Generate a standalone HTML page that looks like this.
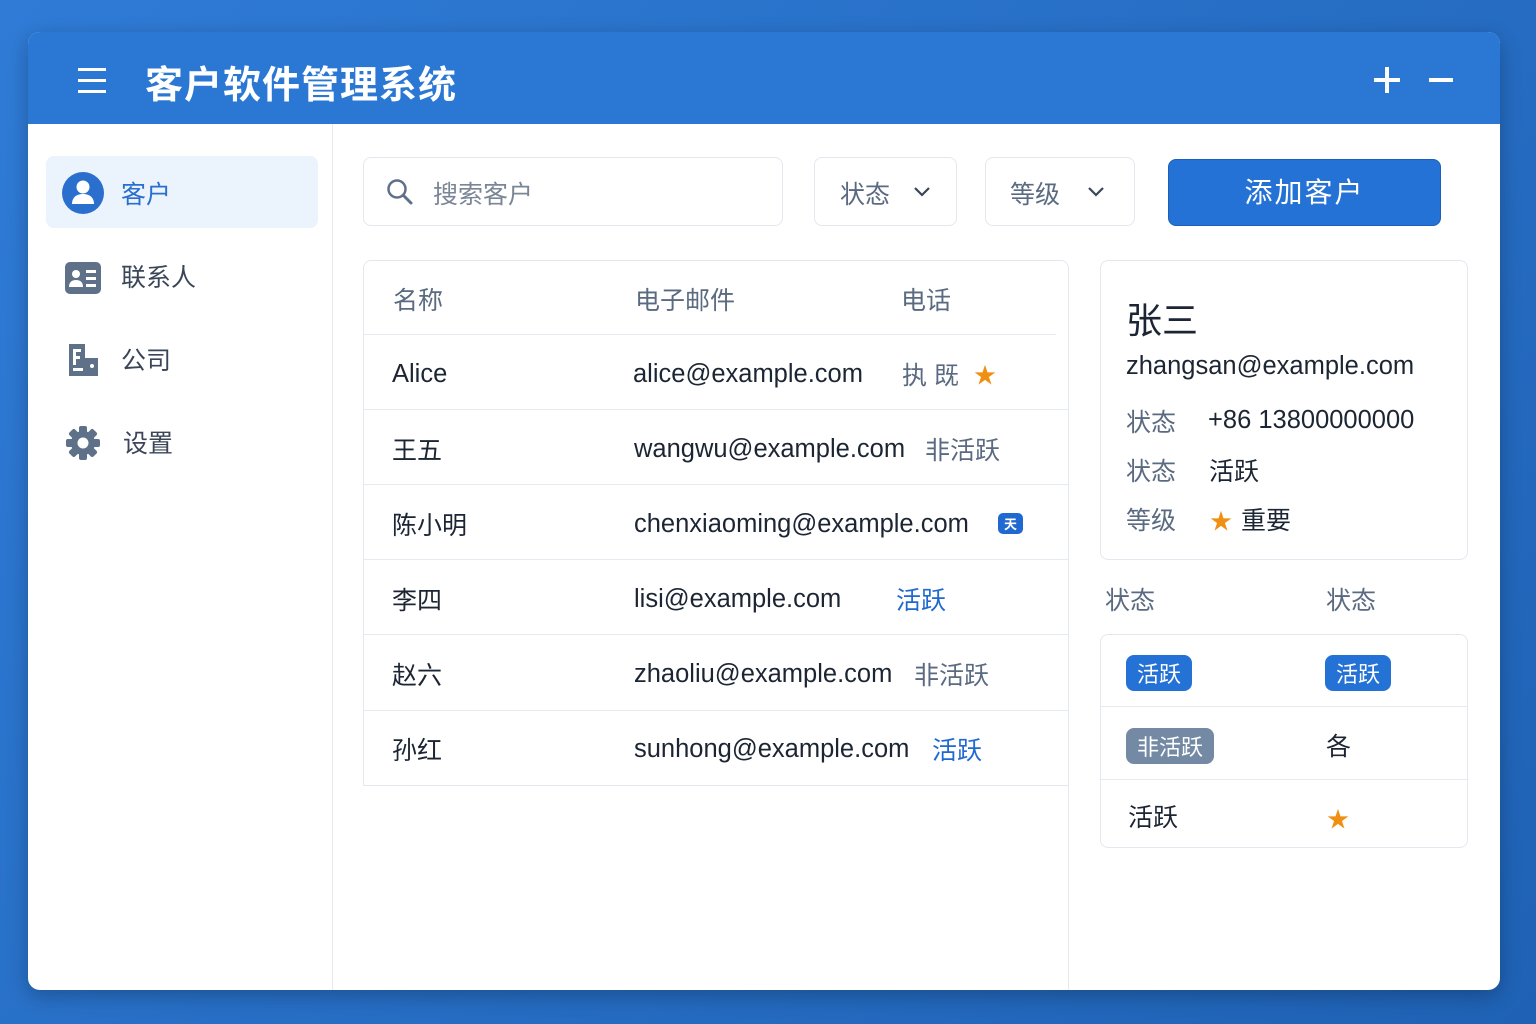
<!DOCTYPE html>
<html><head><meta charset="utf-8"><style>
*{margin:0;padding:0;box-sizing:border-box}
body{width:1536px;height:1024px;background:linear-gradient(135deg,#2f7bd6,#1f62b5);font-family:"Liberation Sans","Noto Sans CJK SC",sans-serif;position:relative;overflow:hidden;color:#1c2533}
.a{position:absolute}
.win{left:28px;top:32px;width:1472px;height:958px;background:#fff;border-radius:12px;overflow:hidden;box-shadow:0 6px 20px rgba(0,0,0,.25)}
.hdr{left:0;top:0;width:1472px;height:92px;background:#2a78d4}
.t{font-size:25px;white-space:nowrap}
.l{font-size:25.5px;margin-top:2px}
.g{color:#5a6a80}
.card{background:#fff;border:1px solid #e3e8ef;border-radius:8px}
.line{height:1px;background:#e6eaf0}
.badge{border-radius:8px;color:#fff;font-size:22px;padding:2px 11px}
.st{color:#f08f12;font-size:22px}
</style></head><body>
<div class="a win">
 <div class="a hdr">
  <div class="a" style="left:50px;top:36px;width:28px;height:3px;background:#fff;box-shadow:0 11px 0 #fff,0 22px 0 #fff"></div>
  <div class="a" style="left:117px;top:22px;color:#fff;font-size:38px;font-weight:bold;letter-spacing:1px">客户软件管理系统</div>
  <div class="a" style="left:1346px;top:46px;width:26px;height:4px;background:#fff"></div>
  <div class="a" style="left:1357px;top:35px;width:4px;height:26px;background:#fff"></div>
  <div class="a" style="left:1401px;top:46px;width:24px;height:4px;background:#fff"></div>
 </div>
 <div class="a" style="left:304px;top:92px;width:1px;height:866px;background:#e6eaf0"></div>
 <div class="a" style="left:18px;top:124px;width:272px;height:72px;background:#ebf3fd;border-radius:8px"></div>
 <svg class="a" style="left:34px;top:140px" width="42" height="42" viewBox="0 0 42 42"><circle cx="21" cy="21" r="21" fill="#2a6fcd"/><circle cx="21" cy="15" r="6.5" fill="#fff"/><path d="M10 32c0-7 5-10 11-10s11 3 11 10z" fill="#fff"/></svg>
 <div class="a t" style="left:93px;top:143px;color:#2a6fcd">客户</div>
 <svg class="a" style="left:37px;top:230px" width="36" height="32" viewBox="0 0 36 32"><rect width="36" height="32" rx="5" fill="#5f7089"/><circle cx="11" cy="12" r="4" fill="#fff"/><path d="M4 25c0-5 3-7 7-7s7 2 7 7z" fill="#fff"/><rect x="21" y="8" width="10" height="3" fill="#fff"/><rect x="21" y="15" width="10" height="3" fill="#fff"/><rect x="21" y="22" width="10" height="3" fill="#fff"/></svg>
 <div class="a t" style="left:93px;top:226px;color:#3a4657">联系人</div>
 <svg class="a" style="left:40px;top:312px" width="32" height="32" viewBox="0 0 32 32"><rect x="1" y="0" width="16" height="32" fill="#5f7089"/><rect x="15" y="14" width="15" height="18" fill="#5f7089"/><rect x="5" y="5" width="3" height="16" fill="#fff"/><rect x="5" y="5" width="8" height="3" fill="#fff"/><rect x="5" y="12" width="7" height="3" fill="#fff"/><rect x="5" y="24" width="10" height="3" fill="#fff"/><circle cx="24" cy="22" r="2" fill="#fff"/></svg>
 <div class="a t" style="left:93px;top:309px;color:#3a4657">公司</div>
 <svg class="a" style="left:38px;top:394px" width="34" height="34" viewBox="-17 -17 34 34"><g fill="#5f7089"><circle r="12"/><rect x="-4" y="-17" width="8" height="34" rx="2"/><rect x="-4" y="-17" width="8" height="34" rx="2" transform="rotate(45)"/><rect x="-4" y="-17" width="8" height="34" rx="2" transform="rotate(90)"/><rect x="-4" y="-17" width="8" height="34" rx="2" transform="rotate(135)"/></g><circle r="5.5" fill="#fff"/></svg>
 <div class="a t" style="left:95px;top:392px;color:#3a4657">设置</div>
 <div class="a card" style="left:335px;top:125px;width:420px;height:69px"></div>
 <svg class="a" style="left:358px;top:146px" width="28" height="28" viewBox="0 0 28 28"><circle cx="11" cy="11" r="8.5" fill="none" stroke="#5f7089" stroke-width="2.5"/><path d="M17.5 17.5L25 25" stroke="#5f7089" stroke-width="3" stroke-linecap="round"/></svg>
 <div class="a t g" style="left:405px;top:143px;color:#7a8696">搜索客户</div>
 <div class="a card" style="left:786px;top:125px;width:143px;height:69px"></div>
 <div class="a t g" style="left:812px;top:143px">状态</div>
 <svg class="a" style="left:885px;top:154px" width="18" height="12"><path d="M2 2l7 7 7-7" fill="none" stroke="#3a4657" stroke-width="2.2"/></svg>
 <div class="a card" style="left:957px;top:125px;width:150px;height:69px"></div>
 <div class="a t g" style="left:982px;top:143px">等级</div>
 <svg class="a" style="left:1059px;top:154px" width="18" height="12"><path d="M2 2l7 7 7-7" fill="none" stroke="#3a4657" stroke-width="2.2"/></svg>
 <div class="a" style="left:1140px;top:127px;width:273px;height:67px;background:#2572d6;border:1px solid #1d5fb8;border-radius:8px;color:#fff;font-size:28px;text-align:center;line-height:65px;letter-spacing:2px">添加客户</div>
 <div class="a card" style="left:335px;top:228px;width:706px;height:526px;border-radius:8px 8px 0 0"></div>
 <div class="a t g" style="left:365px;top:249px">名称</div>
 <div class="a t g" style="left:607px;top:249px">电子邮件</div>
 <div class="a t g" style="left:873px;top:249px">电话</div>
 <div class="a line" style="left:336px;top:302px;width:692px"></div>
 <div class="a line" style="left:336px;top:377px;width:704px"></div>
 <div class="a line" style="left:336px;top:452px;width:704px"></div>
 <div class="a line" style="left:336px;top:527px;width:704px"></div>
 <div class="a line" style="left:336px;top:602px;width:704px"></div>
 <div class="a line" style="left:336px;top:678px;width:704px"></div>
 <div class="a t l" style="left:364px;top:326px">Alice</div><div class="a t l" style="left:605px;top:326px">alice@example.com</div><div class="a t g" style="left:874px;top:324px">执 既</div><div class="a st" style="left:946px;top:326px">★</div>
 <div class="a t" style="left:364px;top:399px">王五</div><div class="a t l" style="left:606px;top:401px">wangwu@example.com</div><div class="a t g" style="left:897px;top:399px">非活跃</div>
 <div class="a t" style="left:364px;top:474px">陈小明</div><div class="a t l" style="left:606px;top:476px">chenxiaoming@example.com</div><div class="a" style="left:970px;top:481px;background:#2069d0;color:#fff;border-radius:5px;font-size:13px;padding:1px 6px;font-weight:bold">天</div>
 <div class="a t" style="left:364px;top:549px">李四</div><div class="a t l" style="left:606px;top:551px">lisi@example.com</div><div class="a t" style="left:868px;top:549px;color:#2069d0">活跃</div>
 <div class="a t" style="left:364px;top:624px">赵六</div><div class="a t l" style="left:606px;top:626px">zhaoliu@example.com</div><div class="a t g" style="left:886px;top:624px">非活跃</div>
 <div class="a t" style="left:364px;top:699px">孙红</div><div class="a t l" style="left:606px;top:701px">sunhong@example.com</div><div class="a t" style="left:904px;top:699px;color:#2069d0">活跃</div>
 <div class="a" style="left:1040px;top:754px;width:1px;height:204px;background:#e6eaf0"></div>
 <div class="a card" style="left:1072px;top:228px;width:368px;height:300px"></div>
 <div class="a" style="left:1098px;top:260px;font-size:36px;color:#1c2533">张三</div>
 <div class="a t l" style="left:1098px;top:318px">zhangsan@example.com</div>
 <div class="a t g" style="left:1098px;top:371px">状态</div><div class="a t l" style="left:1180px;top:372px">+86 13800000000</div>
 <div class="a t g" style="left:1098px;top:420px">状态</div><div class="a t" style="left:1181px;top:420px">活跃</div>
 <div class="a t g" style="left:1098px;top:469px">等级</div><div class="a st" style="left:1182px;top:472px">★</div><div class="a t" style="left:1213px;top:469px">重要</div>
 <div class="a t g" style="left:1077px;top:549px">状态</div><div class="a t g" style="left:1298px;top:549px">状态</div>
 <div class="a card" style="left:1072px;top:602px;width:368px;height:214px"></div>
 <div class="a line" style="left:1073px;top:674px;width:366px"></div>
 <div class="a line" style="left:1073px;top:747px;width:366px"></div>
 <div class="a badge" style="left:1098px;top:623px;background:#2572d6">活跃</div>
 <div class="a badge" style="left:1297px;top:623px;background:#2572d6">活跃</div>
 <div class="a badge" style="left:1098px;top:696px;background:#7489a4">非活跃</div>
 <div class="a t" style="left:1298px;top:695px">各</div>
 <div class="a t" style="left:1100px;top:766px">活跃</div>
 <div class="a st" style="left:1299px;top:770px">★</div>
</div>
</body></html>
